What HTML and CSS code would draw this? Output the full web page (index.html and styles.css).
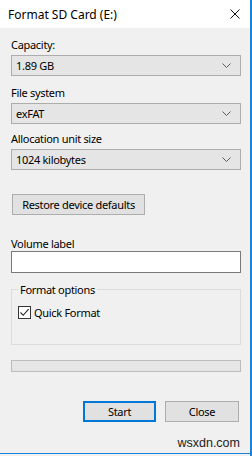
FILE: index.html
```html
<!DOCTYPE html>
<html>
<head>
<meta charset="utf-8">
<link rel="stylesheet" href="styles.css">
</head>
<body>
<div class="window">
  <div class="titlebar">
    <span class="title">Format SD Card (E:)</span>
    <svg class="close-x" width="10" height="10" viewBox="0 0 10 10"><path d="M0.5 0.5 L9.5 9.5 M9.5 0.5 L0.5 9.5" stroke="#111" stroke-width="1" fill="none"/></svg>
  </div>
  <div class="content">
    <div class="label l1">Capacity:</div>
    <div class="select s1"><span>1.89 GB</span><svg class="chev" width="9" height="5" viewBox="0 0 9 5"><path d="M0.5 0.5 L4.5 4.5 L8.5 0.5" stroke="#5a5a5a" fill="none"/></svg></div>
    <div class="label l2">File system</div>
    <div class="select"><span>exFAT</span><svg class="chev" width="9" height="5" viewBox="0 0 9 5"><path d="M0.5 0.5 L4.5 4.5 L8.5 0.5" stroke="#5a5a5a" fill="none"/></svg></div>
    <div class="label l3">Allocation unit size</div>
    <div class="select"><span>1024 kilobytes</span><svg class="chev" width="9" height="5" viewBox="0 0 9 5"><path d="M0.5 0.5 L4.5 4.5 L8.5 0.5" stroke="#5a5a5a" fill="none"/></svg></div>
    <div class="btn restore">Restore device defaults</div>
    <div class="label l4">Volume label</div>
    <div class="input"></div>
    <fieldset class="group">
      <legend>Format options</legend>
      <div class="check-row">
        <span class="checkbox"><svg width="11" height="11" viewBox="0 0 11 11"><path d="M1.5 5.5 L4.2 8.3 L9.6 2.2" stroke="#222" stroke-width="1.1" fill="none"/></svg></span>
        <span>Quick Format</span>
      </div>
    </fieldset>
    <div class="progress"></div>
    <div class="buttons">
      <div class="btn start">Start</div>
      <div class="btn close">Close</div>
    </div>
    <div class="watermark">wsxdn.com</div>
  </div>
  <div class="bottom-line"></div>
</div>
</body>
</html>
```
FILE: styles.css
```css
* { box-sizing: border-box; }
html, body { margin: 0; padding: 0; }
body {
  width: 252px;
  height: 456px;
  background: #f0f0f0;
  font-family: "Noto Sans", "Open Sans", sans-serif;
  font-size: 11px;
  letter-spacing: -0.3px;
  color: #000;
  overflow: hidden;
}
.window {
  width: 252px;
  height: 456px;
  border-right: 2px solid #1883d7;
  display: flex;
  flex-direction: column;
}
.titlebar {
  height: 28px;
  background: #fff;
  display: flex;
  align-items: center;
  justify-content: space-between;
  padding: 0 10px 0 8px;
  flex: none;
}
.title { font-size: 12px; letter-spacing: 0; line-height: 15px; margin-top: 1px; }
.close-x { display: block; }
.content {
  flex: 1;
  display: flex;
  flex-direction: column;
  padding: 0 9px 0 11px;
}
.label { line-height: 15px; }
.l1 { margin-top: 9px; }
.l2 { margin-top: 9px; }
.l3 { margin-top: 7px; }
.l4 { margin-top: 21px; }
.select {
  height: 21px;
  margin-top: 3px;
  background: #e5e5e5;
  border: 1px solid #adadad;
  display: flex;
  align-items: center;
  justify-content: space-between;
  padding: 0 9px 0 4px;
  line-height: 15px;
}
.s1 { margin-top: 3px; }
.chev { display: block; }
.btn {
  height: 21px;
  background: #e1e1e1;
  border: 1px solid #adadad;
  display: flex;
  align-items: center;
  justify-content: center;
  line-height: 15px;
}
.restore {
  margin-top: 24px;
  margin-left: 1px;
  width: 133px;
}
.input {
  height: 22px;
  margin-top: 0;
  background: #fff;
  border: 1px solid #7a7a7a;
}
.group {
  margin: 9px 0 0 0;
  padding: 0 6px 24px 6px;
  border: 1px solid #dcdcdc;
  min-inline-size: 0;
}
.group legend {
  padding: 0 2px;
  line-height: 15px;
}
.check-row {
  display: flex;
  align-items: center;
  gap: 3px;
  line-height: 15px;
  margin-top: 8px;
}
.checkbox {
  width: 13px;
  height: 13px;
  border: 1px solid #333;
  background: #fff;
  display: flex;
  align-items: center;
  justify-content: center;
}
.checkbox svg { display: block; }
.progress {
  margin-top: 15px;
  height: 12px;
  background: #e6e6e6;
  border: 1px solid #bcbcbc;
}
.buttons {
  margin-top: 29px;
  display: flex;
  justify-content: flex-end;
  gap: 9px;
  padding-right: 2px;
}
.start {
  width: 73px;
  border: 2px solid #0078d7;
}
.close { width: 74px; }
.watermark {
  margin-top: 14px;
  align-self: flex-end;
  font-family: "Liberation Sans", Arial, sans-serif;
  font-size: 12.5px;
  letter-spacing: 0;
  line-height: 14px;
  color: #222;
  padding-right: 1px;
}
.bottom-line {
  height: 1px;
  background: #1883d7;
  margin-bottom: 2px;
  flex: none;
}
```
